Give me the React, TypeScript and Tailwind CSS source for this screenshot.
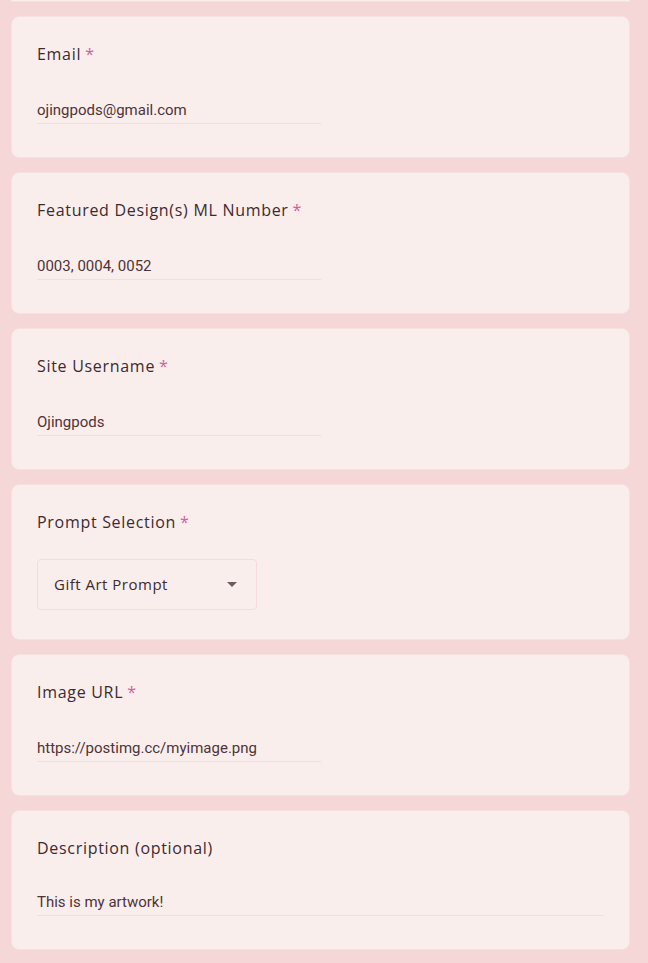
const labelFont = { fontFamily: "'Open Sans', Lato, sans-serif" };

type Field = { label: string; value: string; required: boolean; wide?: boolean };

const Label = ({ text, required }: { text: string; required: boolean }) => (
  <div className="h-6 text-[16px] leading-6 tracking-[0.7px] text-[#3d2a30]" style={labelFont}>
    {text}
    {required && <span className="ml-1 text-[#d0609c]">*</span>}
  </div>
);

const TextCard = ({ label, value, required, wide }: Field) => (
  <div className="rounded-lg border border-[#f7e0e0] bg-[#faeeec] px-[25px] pt-[25px] pb-[33px]">
    <Label text={label} required={required} />
    <div
      className={`border-b border-[#f6dcdc] pb-[3px] text-[15px] leading-5 text-[#4e3338] ${wide ? "mt-[32px] w-full" : "mt-[34px] w-[284px]"}`}
      style={{ fontFamily: "Roboto, sans-serif" }}
    >
      {value}
    </div>
  </div>
);

const SelectCard = () => (
  <div className="rounded-lg border border-[#f7e0e0] bg-[#faeeec] px-[25px] pt-[25px] pb-[29px]">
    <Label text="Prompt Selection" required />
    <div className="mt-[25px] flex h-[51px] w-[220px] items-center justify-between rounded border border-[#f8d9dc] pl-[16px] pr-[19px]">
      <span className="text-[15px] tracking-[0.5px] text-[#3d2a30]" style={labelFont}>
        Gift Art Prompt
      </span>
      <svg width="10" height="5" viewBox="0 0 10 5">
        <path d="M0 0 L10 0 L5 5 Z" fill="#6e5a5e" />
      </svg>
    </div>
  </div>
);

export default function App() {
  return (
    <div className="min-h-[963px] w-[648px] bg-[#f6d7d8] pl-[11px] pr-[18px]">
      <div className="h-[2px] rounded-b-lg border-b border-[#f7e0e0] bg-[#faeeec]" />
      <div className="mt-[14px] flex flex-col gap-[14px]">
        <TextCard label="Email" value="ojingpods@gmail.com" required />
        <TextCard label="Featured Design(s) ML Number" value="0003, 0004, 0052" required />
        <TextCard label="Site Username" value="Ojingpods" required />
        <SelectCard />
        <TextCard label="Image URL" value="https://postimg.cc/myimage.png" required />
        <TextCard label="Description (optional)" value="This is my artwork!" required={false} wide />
      </div>
    </div>
  );
}
